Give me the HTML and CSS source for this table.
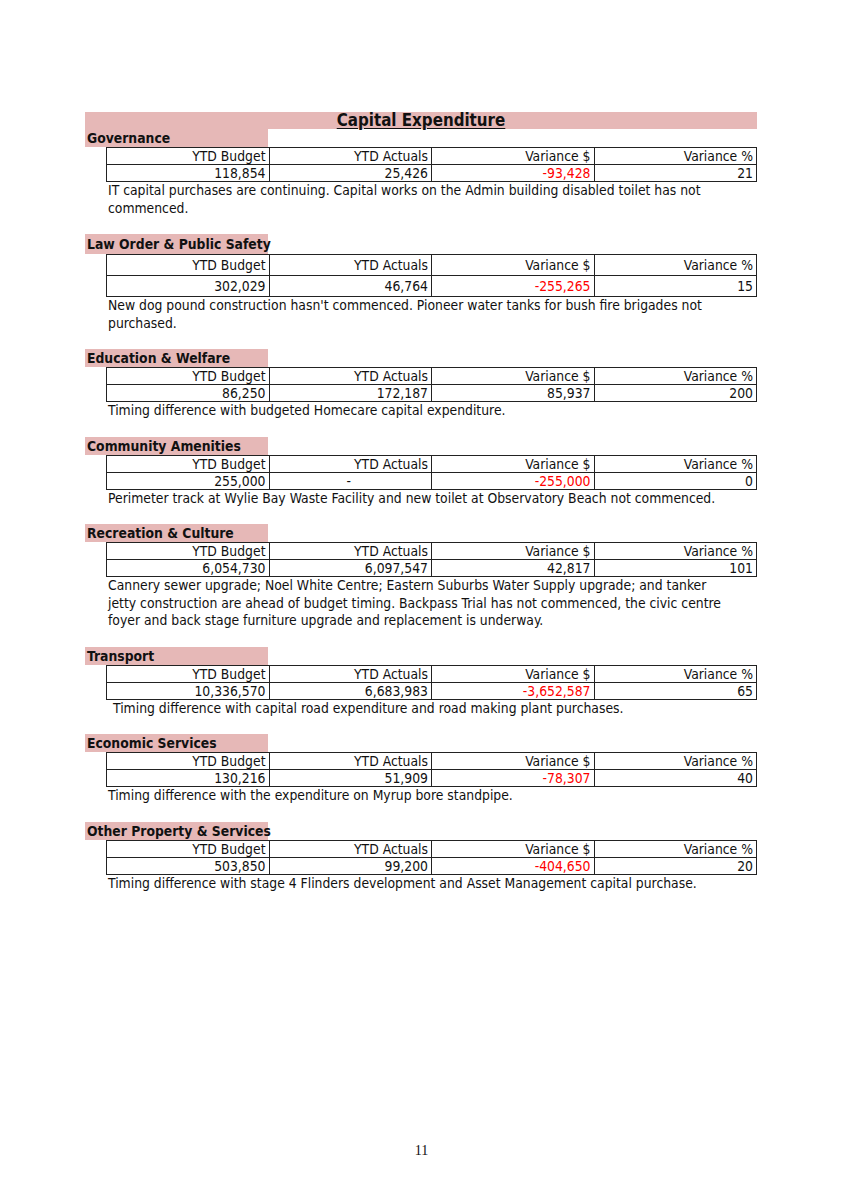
FILE: index.html
```html
<!DOCTYPE html>
<html>
<head>
<meta charset="utf-8">
<link rel="stylesheet" href="styles.css">
</head>
<body>
<div class="page">
  <div class="content">
    <div class="title-band"><span class="title">Capital Expenditure</span></div>

    <section class="sec sec-first">
      <div class="hdr">Governance</div>
      <table class="tbl">
        <tr><td>YTD Budget</td><td>YTD Actuals</td><td>Variance $</td><td>Variance %</td></tr>
        <tr><td>118,854</td><td>25,426</td><td class="neg">-93,428</td><td>21</td></tr>
      </table>
      <p class="note">IT capital purchases are continuing. Capital works on the Admin building disabled toilet has not<br>commenced.</p>
    </section>

    <section class="sec">
      <div class="hdr hdr-tall">Law Order &amp; Public Safety</div>
      <table class="tbl tall">
        <tr><td>YTD Budget</td><td>YTD Actuals</td><td>Variance $</td><td>Variance %</td></tr>
        <tr><td>302,029</td><td>46,764</td><td class="neg">-255,265</td><td>15</td></tr>
      </table>
      <p class="note">New dog pound construction hasn't commenced. Pioneer water tanks for bush fire brigades not<br>purchased.</p>
    </section>

    <section class="sec">
      <div class="hdr">Education &amp; Welfare</div>
      <table class="tbl">
        <tr><td>YTD Budget</td><td>YTD Actuals</td><td>Variance $</td><td>Variance %</td></tr>
        <tr><td>86,250</td><td>172,187</td><td>85,937</td><td>200</td></tr>
      </table>
      <p class="note">Timing difference with budgeted Homecare capital expenditure.</p>
    </section>

    <section class="sec">
      <div class="hdr">Community Amenities</div>
      <table class="tbl">
        <tr><td>YTD Budget</td><td>YTD Actuals</td><td>Variance $</td><td>Variance %</td></tr>
        <tr><td>255,000</td><td class="dash">-</td><td class="neg">-255,000</td><td>0</td></tr>
      </table>
      <p class="note">Perimeter track at Wylie Bay Waste Facility and new toilet at Observatory Beach not commenced.</p>
    </section>

    <section class="sec">
      <div class="hdr">Recreation &amp; Culture</div>
      <table class="tbl">
        <tr><td>YTD Budget</td><td>YTD Actuals</td><td>Variance $</td><td>Variance %</td></tr>
        <tr><td>6,054,730</td><td>6,097,547</td><td>42,817</td><td>101</td></tr>
      </table>
      <p class="note">Cannery sewer upgrade; Noel White Centre; Eastern Suburbs Water Supply upgrade; and tanker<br>jetty construction are ahead of budget timing. Backpass Trial has not commenced, the civic centre<br>foyer and back stage furniture upgrade and replacement is underway.</p>
    </section>

    <section class="sec">
      <div class="hdr">Transport</div>
      <table class="tbl">
        <tr><td>YTD Budget</td><td>YTD Actuals</td><td>Variance $</td><td>Variance %</td></tr>
        <tr><td>10,336,570</td><td>6,683,983</td><td class="neg">-3,652,587</td><td>65</td></tr>
      </table>
      <p class="note indent">Timing difference with capital road expenditure and road making plant purchases.</p>
    </section>

    <section class="sec">
      <div class="hdr">Economic Services</div>
      <table class="tbl">
        <tr><td>YTD Budget</td><td>YTD Actuals</td><td>Variance $</td><td>Variance %</td></tr>
        <tr><td>130,216</td><td>51,909</td><td class="neg">-78,307</td><td>40</td></tr>
      </table>
      <p class="note">Timing difference with the expenditure on Myrup bore standpipe.</p>
    </section>

    <section class="sec">
      <div class="hdr">Other Property &amp; Services</div>
      <table class="tbl">
        <tr><td>YTD Budget</td><td>YTD Actuals</td><td>Variance $</td><td>Variance %</td></tr>
        <tr><td>503,850</td><td>99,200</td><td class="neg">-404,650</td><td>20</td></tr>
      </table>
      <p class="note">Timing difference with stage 4 Flinders development and Asset Management capital purchase.</p>
    </section>
  </div>
  <div class="page-num">11</div>
</div>
</body>
</html>
```

FILE: styles.css
```css
html, body {
  margin: 0;
  padding: 0;
  background: #fff;
}

.page {
  width: 843px;
  height: 1193px;
  position: relative;
  font-family: "DejaVu Sans Condensed", "DejaVu Sans", sans-serif;
  font-size: 13.8px;
  color: #111;
}

.content {
  padding-top: 112px;
  margin-left: 85px;
  width: 672px;
}

.title-band {
  height: 17px;
  background: #e6b8b7;
  text-align: center;
  line-height: 17px;
}

.title {
  font-weight: bold;
  font-size: 16.8px;
  text-decoration: underline;
  text-underline-offset: 2px;
}

.sec {
  margin-top: 17px;
}

.sec-first {
  margin-top: 0;
}

.hdr {
  width: 181px;
  height: 18px;
  line-height: 18px;
  padding-left: 2px;
  background: #e6b8b7;
  font-weight: bold;
  white-space: nowrap;
}

.hdr-tall {
  height: 20px;
  line-height: 20px;
}

.tbl {
  margin-left: 21px;
  width: 651px;
  border-collapse: collapse;
  table-layout: fixed;
}

.tbl td {
  border: 1px solid #222;
  height: 16px;
  padding: 0 3px 0 0;
  text-align: right;
  line-height: 16px;
  width: 25%;
}

.tbl.tall td {
  height: 20px;
  line-height: 20px;
}

.tbl td.neg {
  color: #f00;
}

.tbl td.dash {
  text-align: center;
}

.note {
  margin: 0;
  padding-left: 23px;
  line-height: 17.5px;
  white-space: nowrap;
}

.note.indent {
  padding-left: 28px;
}

.page-num {
  position: absolute;
  left: 0;
  right: 0;
  top: 1143px;
  text-align: center;
  font-family: "Liberation Serif", serif;
  font-size: 14px;
}
```
